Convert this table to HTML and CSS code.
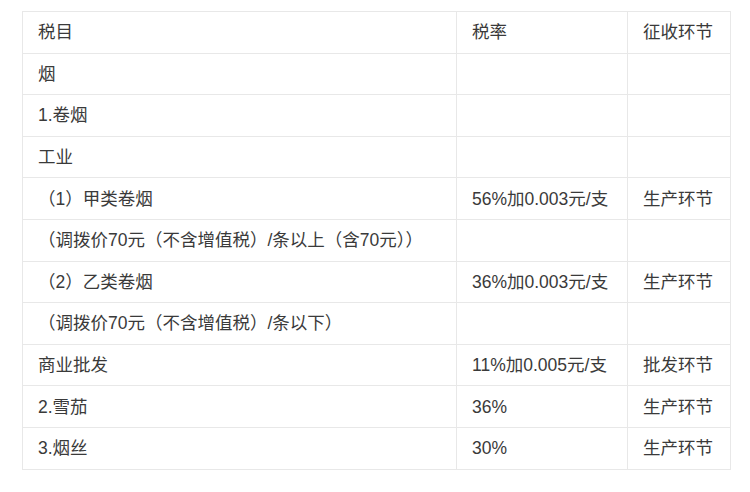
FILE: index.html
```html
<!DOCTYPE html>
<html lang="zh">
<head>
<meta charset="utf-8">
<link rel="stylesheet" href="styles.css">
</head>
<body>
<table class="tax">
  <tr><td class="c1">税目</td><td class="c2">税率</td><td class="c3">征收环节</td></tr>
  <tr><td>烟</td><td></td><td></td></tr>
  <tr><td>1.卷烟</td><td></td><td></td></tr>
  <tr><td>工业</td><td></td><td></td></tr>
  <tr><td>（1）甲类卷烟</td><td>56%加0.003元/支</td><td>生产环节</td></tr>
  <tr><td>（调拨价70元（不含增值税）/条以上（含70元））</td><td></td><td></td></tr>
  <tr><td>（2）乙类卷烟</td><td>36%加0.003元/支</td><td>生产环节</td></tr>
  <tr><td>（调拨价70元（不含增值税）/条以下）</td><td></td><td></td></tr>
  <tr><td>商业批发</td><td>11%加0.005元/支</td><td>批发环节</td></tr>
  <tr><td>2.雪茄</td><td>36%</td><td>生产环节</td></tr>
  <tr><td>3.烟丝</td><td>30%</td><td>生产环节</td></tr>
</table>
</body>
</html>
```
FILE: styles.css
```css
html, body {
  margin: 0;
  padding: 0;
  background: #fff;
}
body {
  padding: 11px 0 0 22px;
  font-family: "Liberation Sans", "Noto Sans CJK SC", sans-serif;
  font-size: 17.5px;
  color: #3a3a3a;
}
.tax {
  border-collapse: collapse;
  table-layout: fixed;
  width: 708px;
}
.tax td {
  border: 1px solid #e8e8e8;
  padding: 0 15px;
  height: 41.6px;
  box-sizing: border-box;
  line-height: 24px;
  vertical-align: middle;
  white-space: nowrap;
}
.c1 { width: 434px; }
.c2 { width: 171px; }
.c3 { width: 103px; }
```
